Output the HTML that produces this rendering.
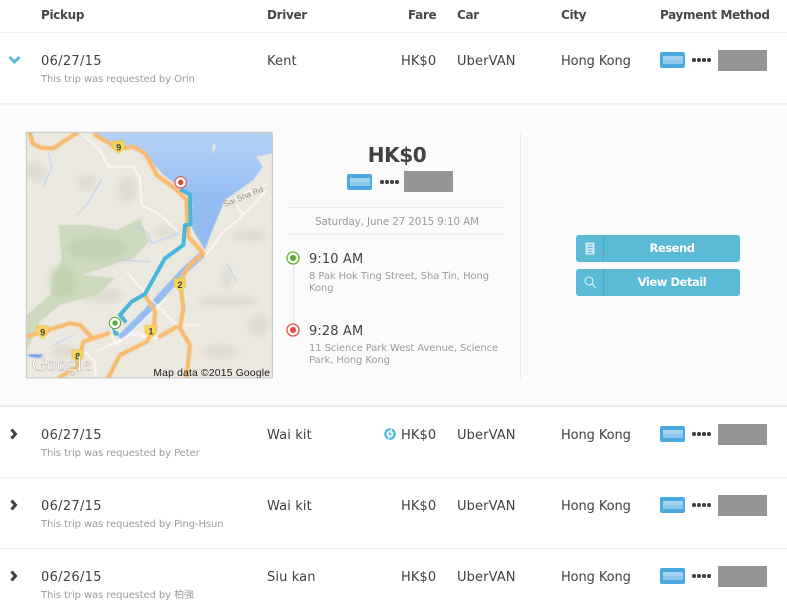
<!DOCTYPE html>
<html><head><meta charset="utf-8">
<style>
html,body{margin:0;padding:0;background:#fff}
#p{position:relative;width:787px;height:611px;overflow:hidden;background:#fff;font-family:"DejaVu Sans","Noto Sans CJK SC",sans-serif;color:#3f4145}
.t{position:absolute;white-space:nowrap;line-height:16px;font-size:13px;letter-spacing:.12px}
.dt{letter-spacing:.3px}
.hk{letter-spacing:-.1px}
.h{font-weight:bold;font-size:12px;color:#45474a;letter-spacing:-.33px}
.s{font-size:10px;color:#9a9b9d;letter-spacing:-.1px}
.l{position:absolute;left:0;width:787px;height:2px;background:#efefef}
.m{position:absolute;width:49px;height:21px;background:#959595}
.a{position:absolute;width:25px;height:16px;border-radius:2px;background:#4ba9e0}
.a i{position:absolute;left:3px;right:2px;height:4px;background:#a5d2f0;display:block}
.a i:first-child{top:4px}.a i:last-child{top:8px;background:#8fc7ec}
.d{position:absolute;font-size:0}
.d b{display:inline-block;width:3.5px;height:3.5px;border-radius:50%;background:#3f4145;margin-right:1.5px}
.btn{position:absolute;left:576px;width:164px;height:27px;border-radius:3px;background:#5bbad6;color:#fff;font-weight:bold;font-size:11.5px;line-height:27px;letter-spacing:-.45px}
.btn span{position:absolute;left:28px;right:0;text-align:center}
.btn u{position:absolute;left:27px;top:0;width:1px;height:27px;background:#4ba7c4}
.btn svg{position:absolute;left:7px;top:6px}
</style></head><body><div id="p">
<div class="t h" style="left:41px;top:7px">Pickup</div>
<div class="t h" style="left:267px;top:7px">Driver</div>
<div class="t h" style="left:408px;top:7px">Fare</div>
<div class="t h" style="left:457px;top:7px">Car</div>
<div class="t h" style="left:561px;top:7px">City</div>
<div class="t h" style="left:660px;top:7px">Payment Method</div>
<div class="l" style="top:32px;height:1px"></div>

<svg style="position:absolute;left:8px;top:55px" width="13" height="10" viewBox="0 0 13 10"><path d="M1.5 2 L6.5 7 L11.5 2" fill="none" stroke="#5bbad6" stroke-width="3"/></svg>
<div class="t dt" style="left:41px;top:54px">06/27/15</div>
<div class="t s" style="left:41px;top:72px">This trip was requested by Orin</div>
<div class="t" style="left:267px;top:54px">Kent</div>
<div class="t" style="left:401px;top:54px">HK$0</div>
<div class="t" style="left:457px;top:54px">UberVAN</div>
<div class="t hk" style="left:561px;top:54px">Hong Kong</div>
<div class="a" style="left:660px;top:52px"><i></i><i></i></div>
<div class="d" style="left:692px;top:58px"><b></b><b></b><b></b><b></b></div>
<div class="m" style="left:718px;top:50px"></div>

<div style="position:absolute;left:0;top:103px;width:787px;height:304px;background:#fbfbfb;border-top:2px solid #f0f0f0;border-bottom:2px solid #ececec;box-sizing:border-box"></div>

<svg style="position:absolute;left:20px;top:125px" width="260" height="260" viewBox="0 0 780 780">
<defs><clipPath id="c"><rect x="20" y="22" width="737" height="737"/></clipPath>
<linearGradient id="w" x1="0" y1="0" x2="0" y2="1"><stop offset="0" stop-color="#b6d2f8"/><stop offset=".6" stop-color="#93bbf2"/></linearGradient>
<filter id="b1" x="-10%" y="-10%" width="120%" height="120%"><feGaussianBlur stdDeviation="1.4"/></filter>
<filter id="b2" x="-30%" y="-30%" width="160%" height="160%"><feGaussianBlur stdDeviation="9"/></filter></defs>
<g clip-path="url(#c)">
<rect x="20" y="22" width="737" height="737" fill="#ebe8df"/>
<g fill="#dcd8cd" opacity=".7" filter="url(#b2)"><ellipse cx="320" cy="195" rx="28" ry="40"/><ellipse cx="45" cy="140" rx="28" ry="28"/><ellipse cx="200" cy="170" rx="28" ry="22"/><ellipse cx="440" cy="320" rx="40" ry="15"/><ellipse cx="620" cy="530" rx="90" ry="18"/><ellipse cx="715" cy="600" rx="30" ry="35"/><ellipse cx="620" cy="460" rx="16" ry="32"/><ellipse cx="250" cy="510" rx="60" ry="22"/><ellipse cx="600" cy="680" rx="60" ry="20"/><ellipse cx="130" cy="680" rx="40" ry="18"/><ellipse cx="690" cy="330" rx="50" ry="20"/></g>
<g filter="url(#b1)">
<path d="M215 22 L300 62 L375 85 L430 150 L492 195 L518 235 L516 310 L555 375 L575 320 L615 225 L700 165 L728 125 L708 95 L757 85 L757 22Z" fill="url(#w)"/>
<path d="M575 82 L580 58 L587 56 L584 76Z" fill="#e8e6dc"/>
<path d="M115 300 L205 300 L290 315 L360 280 L388 350 L340 400 L260 425 L190 450 L285 460 L230 510 L120 540 L60 590 L20 680 L20 570 L90 510 L125 400Z" fill="#cddabd"/>
<g fill="#c3d3b1" filter="url(#b2)"><ellipse cx="230" cy="370" rx="90" ry="38"/><ellipse cx="130" cy="470" rx="40" ry="50"/></g>
<path d="M550 385 L490 440 L380 560 L300 640" fill="none" stroke="#93bbf2" stroke-width="20"/>
<g fill="none" stroke="#a9c9f5" stroke-width="2.5"><path d="M85 80 L95 130 L68 185"/><path d="M200 240 L230 190 L245 160"/><path d="M170 270 L200 240"/><path d="M345 300 L385 325 L395 355 L480 325"/><path d="M620 415 L650 470"/><path d="M100 660 L160 630"/><path d="M300 405 L390 410"/></g>
<path d="M20 688 L70 688 L60 700 L30 695Z" fill="#6aa3ee"/>
<g fill="none" stroke="#fff" stroke-width="4" stroke-linejoin="round" opacity=".9"><path d="M190 30 L240 75 L265 125 L340 125 L360 160 L365 240 L420 270 L475 320"/><path d="M555 395 L610 320 L660 280 L740 195"/><path d="M612 240 L650 215 L735 180"/><path d="M320 440 L385 515 L470 600 L540 600"/><path d="M275 630 L290 660 L340 615 L440 520"/><path d="M195 680 L225 710 L228 757"/><path d="M230 680 L350 620 L390 640"/><path d="M470 600 L410 640 L340 630"/><path d="M650 240 L670 270"/></g>
<g fill="none" stroke="#f5bc6f" stroke-width="13" stroke-linejoin="round" stroke-linecap="round"><path d="M30 25 L38 55 L60 68 L100 70 L130 50 L170 25"/><path d="M225 30 L270 55 L290 72 L340 65 L375 85 L395 120 L410 150 L470 195 L500 225 L503 300 L505 335 L550 385 L510 420 L480 465 L490 550 L480 610 L510 660 L498 770"/><path d="M20 635 L150 595 L180 600 L218 640 L265 625 L190 650 L180 690 L170 725 L100 770"/><path d="M375 510 L405 560 L402 610 L380 650 L300 690 L258 770"/><path d="M420 635 L470 605"/></g>
</g>
<path d="M480 193 L510 208 L512 298 L495 300 L490 360 L435 400 L375 507 L335 530 L300 570 L318 592" fill="none" stroke="#4bb6dc" stroke-width="12" stroke-linejoin="round"/>
<path d="M276 610 L296 622 L296 632 L282 632Z" fill="#4bb6dc"/>
<g fill="#f6d35c" stroke="#e3b53a" stroke-width="1"><path d="M278 47h35v24l-17 16l-18-16z"/><path d="M50 602h35v24l-17 16l-18-16z"/><path d="M155 674h35v24l-17 16l-18-16z"/><path d="M375 600h35v24l-17 16l-18-16z"/><path d="M462 460h35v24l-17 16l-18-16z"/></g>
<g font-family="Liberation Sans,sans-serif" font-weight="bold" font-size="28" fill="#4a4636" text-anchor="middle"><text x="296" y="76">9</text><text x="68" y="631">9</text><text x="173" y="703">8</text><text x="393" y="629">1</text><text x="480" y="489">2</text></g>
<text x="614" y="246" transform="rotate(-22 614 246)" font-family="Liberation Sans,sans-serif" font-size="25" fill="#6e6a60" stroke="#fff" stroke-width=".4">Sai Sha Rd</text>
<circle cx="482" cy="172" r="17" fill="#fff" stroke="#e2483c" stroke-width="3"/><circle cx="482" cy="172" r="8" fill="#e2483c"/>
<circle cx="285" cy="594" r="17" fill="#fff" stroke="#5da832" stroke-width="3"/><circle cx="285" cy="594" r="8" fill="#5da832"/>
<text x="36" y="738" font-family="Liberation Serif,serif" font-size="62" fill="#fff" fill-opacity=".92" stroke="#9a9a96" stroke-width="1" textLength="178" lengthAdjust="spacingAndGlyphs">Google</text>
<text x="400" y="753" font-family="Liberation Sans,sans-serif" font-size="31" fill="#1c1c1c" textLength="350">Map data ©2015 Google</text>
</g>
<rect x="19" y="22" width="738" height="737" fill="none" stroke="#c4c4c4" stroke-width="3"/>
</svg>

<div class="t" style="left:288px;width:218px;top:142px;text-align:center;font-size:20px;line-height:26px;font-weight:bold;letter-spacing:-.4px">HK$0</div>
<div class="a" style="left:347px;top:174px"><i></i><i></i></div>
<div class="d" style="left:380px;top:180px"><b></b><b></b><b></b><b></b></div>
<div class="m" style="left:404px;top:171px"></div>
<div style="position:absolute;left:288px;top:207px;width:218px;height:1px;background:#ececec"></div>
<div style="position:absolute;left:288px;top:234px;width:218px;height:1px;background:#ececec"></div>
<div class="t s" style="left:288px;width:218px;top:214px;text-align:center;font-size:10.3px">Saturday, June 27 2015 9:10 AM</div>

<div style="position:absolute;left:293px;top:264px;width:1px;height:60px;background:#e8e8e8"></div>
<svg style="position:absolute;left:285px;top:250px" width="16" height="88" viewBox="0 0 16 88"><circle cx="8" cy="8" r="6" fill="#fbfbfb" stroke="#6ab32e" stroke-width="1.3"/><circle cx="8" cy="8" r="3" fill="#5da832"/><circle cx="8" cy="80" r="6" fill="#fbfbfb" stroke="#e2524a" stroke-width="1.3"/><circle cx="8" cy="80" r="3" fill="#e2483c"/></svg>
<div class="t" style="left:309px;top:252px;font-size:13px">9:10 AM</div>
<div class="t s" style="left:309px;top:271px;line-height:12px">8 Pak Hok Ting Street, Sha Tin, Hong<br>Kong</div>
<div class="t" style="left:309px;top:324px;font-size:13px">9:28 AM</div>
<div class="t s" style="left:309px;top:343px;line-height:12px">11 Science Park West Avenue, Science<br>Park, Hong Kong</div>

<div style="position:absolute;left:520px;top:133px;width:1px;height:246px;background:#ececec"></div>

<div class="btn" style="top:235px"><svg width="14" height="15" viewBox="0 0 14 15"><path d="M2.5 1.5h9v12h-9z" fill="#cfeaf2"/><path d="M4.5 4h5M4.5 6.5h5M4.5 9h5M4.5 11.5h5" stroke="#5bbad6" stroke-width="1"/></svg><u></u><span>Resend</span></div>
<div class="btn" style="top:269px"><svg width="14" height="15" viewBox="0 0 14 15"><circle cx="6" cy="6" r="4" fill="none" stroke="#e4f4f8" stroke-width="1.1"/><path d="M9 9l4 4" stroke="#e4f4f8" stroke-width="1.2"/></svg><u></u><span>View Detail</span></div>

<!-- row 2 -->
<svg style="position:absolute;left:9px;top:428px" width="10" height="12" viewBox="0 0 10 12"><path d="M2.5 1.5 L6.5 6 L2.5 10.5" fill="none" stroke="#3f4145" stroke-width="3"/></svg>
<div class="t dt" style="left:41px;top:428px">06/27/15</div>
<div class="t s" style="left:41px;top:446px">This trip was requested by Peter</div>
<div class="t" style="left:267px;top:428px">Wai kit</div>
<svg style="position:absolute;left:384px;top:428px" width="12" height="12" viewBox="0 0 12 12"><circle cx="6" cy="6" r="4.7" fill="none" stroke="#4fb5d8" stroke-width="2.2"/><path d="M7.8 .8L3 6.8h2.6L4.2 11.2l4.8-6H6.4z" fill="#4fb5d8" stroke="#fff" stroke-width=".7"/></svg>
<div class="t" style="left:401px;top:428px">HK$0</div>
<div class="t" style="left:457px;top:428px">UberVAN</div>
<div class="t hk" style="left:561px;top:428px">Hong Kong</div>
<div class="a" style="left:660px;top:426px"><i></i><i></i></div>
<div class="d" style="left:692px;top:432px"><b></b><b></b><b></b><b></b></div>
<div class="m" style="left:718px;top:424px"></div>
<div class="l" style="top:477px;height:1px"></div>

<!-- row 3 -->
<svg style="position:absolute;left:9px;top:499px" width="10" height="12" viewBox="0 0 10 12"><path d="M2.5 1.5 L6.5 6 L2.5 10.5" fill="none" stroke="#3f4145" stroke-width="3"/></svg>
<div class="t dt" style="left:41px;top:499px">06/27/15</div>
<div class="t s" style="left:41px;top:517px">This trip was requested by Ping-Hsun</div>
<div class="t" style="left:267px;top:499px">Wai kit</div>
<div class="t" style="left:401px;top:499px">HK$0</div>
<div class="t" style="left:457px;top:499px">UberVAN</div>
<div class="t hk" style="left:561px;top:499px">Hong Kong</div>
<div class="a" style="left:660px;top:497px"><i></i><i></i></div>
<div class="d" style="left:692px;top:503px"><b></b><b></b><b></b><b></b></div>
<div class="m" style="left:718px;top:495px"></div>
<div class="l" style="top:548px;height:1px"></div>

<!-- row 4 -->
<svg style="position:absolute;left:9px;top:570px" width="10" height="12" viewBox="0 0 10 12"><path d="M2.5 1.5 L6.5 6 L2.5 10.5" fill="none" stroke="#3f4145" stroke-width="3"/></svg>
<div class="t dt" style="left:41px;top:570px">06/26/15</div>
<div class="t s" style="left:41px;top:588px">This trip was requested by 柏強</div>
<div class="t" style="left:267px;top:570px">Siu kan</div>
<div class="t" style="left:401px;top:570px">HK$0</div>
<div class="t" style="left:457px;top:570px">UberVAN</div>
<div class="t hk" style="left:561px;top:570px">Hong Kong</div>
<div class="a" style="left:660px;top:568px"><i></i><i></i></div>
<div class="d" style="left:692px;top:574px"><b></b><b></b><b></b><b></b></div>
<div class="m" style="left:718px;top:566px"></div>
</div></body></html>
